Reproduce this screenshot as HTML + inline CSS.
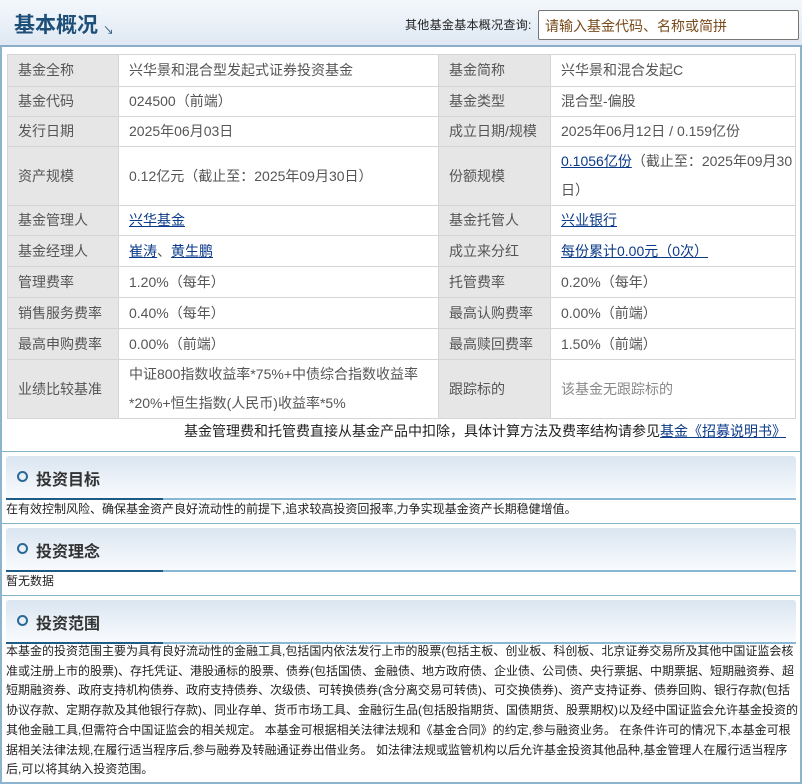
<!DOCTYPE html>
<html><head><meta charset="utf-8"><style>
*{margin:0;padding:0;box-sizing:border-box}
body{width:802px;height:784px;overflow:hidden;background:#fff;font-family:"Liberation Sans","Noto Sans CJK SC",sans-serif;position:relative;color:#333}
.frame{position:absolute;left:0;top:0;width:802px;height:784px;border-left:2px solid #8cb4cf;border-right:2px solid #8cb4cf;border-bottom:2px solid #8cb4cf}
.hdr{position:absolute;left:0;top:0;width:802px;height:47px;background:linear-gradient(#f4f8fc,#dfe8f3);border-bottom:2px solid #8aaec9}
.hdr h1{position:absolute;left:14px;top:9px;font-size:21px;font-weight:bold;color:#1e4f78}
.hdr .arr{position:absolute;left:103px;top:22px;font-size:11px;color:#1e4f78}
.hdr .q{position:absolute;left:405px;top:16px;font-size:12px;letter-spacing:0.3px;color:#222;white-space:nowrap}
.hdr .inp{position:absolute;left:538px;top:10px;width:261px;height:30px;border:1px solid #777;background:#fff;font-size:14px;color:#7a4a1a;padding:5px 6px;border-radius:2px}
table{position:absolute;left:7px;top:54px;width:789px;border-collapse:collapse;font-size:14px}
td{border:1px solid #d5d5d5;padding:0 8px 0 10px;color:#555;line-height:29px}
td.l{background:#e6e6e6;width:111px}
td.v1{width:320px}
td.l2{background:#e6e6e6;width:112px}
a{color:#0b3a8a;text-decoration:underline}
.note{position:absolute;right:16px;top:421px;font-size:14px;color:#222}
.sep{position:absolute;left:0;width:802px;height:1px;background:#8ab2c9}
.sec{position:absolute;left:6px;width:790px;height:44px;background:linear-gradient(#dae5f1,#fafcfe);border-radius:3px 3px 0 0}
.sec .bar{position:absolute;left:0;bottom:0;width:790px;height:2px;background:#8ab8d4}
.sec .bar2{position:absolute;left:0;bottom:0;width:157px;height:2px;background:#1e5c88}
.sec .c{position:absolute;left:11px;top:15px;width:11px;height:11px;border:2px solid #2a6a96;border-radius:50%}
.sec .t{position:absolute;left:30px;top:10px;font-size:16px;font-weight:bold;color:#333}
.txt{position:absolute;left:6px;font-size:12px;color:#222}
.para{position:absolute;left:6px;width:792px;top:642px;font-size:12px;line-height:19.7px;color:#222}
</style></head><body>
<div class="frame"></div>
<div class="hdr"><h1>基本概况</h1><span class="arr">↘</span><span class="q">其他基金基本概况查询:</span><div class="inp">请输入基金代码、名称或简拼</div></div>
<table>
<tr style="height:32px"><td class="l">基金全称</td><td class="v1">兴华景和混合型发起式证券投资基金</td><td class="l2">基金简称</td><td>兴华景和混合发起C</td></tr>
<tr style="height:30px"><td class="l">基金代码</td><td>024500（前端）</td><td class="l2">基金类型</td><td>混合型-偏股</td></tr>
<tr style="height:30px"><td class="l">发行日期</td><td>2025年06月03日</td><td class="l2">成立日期/规模</td><td>2025年06月12日 / 0.159亿份</td></tr>
<tr style="height:57px"><td class="l">资产规模</td><td>0.12亿元（截止至：2025年09月30日）</td><td class="l2">份额规模</td><td style="padding-right:2px"><a>0.1056亿份</a>（截止至：2025年09月30日）</td></tr>
<tr style="height:30px"><td class="l">基金管理人</td><td><a>兴华基金</a></td><td class="l2">基金托管人</td><td><a>兴业银行</a></td></tr>
<tr style="height:31px"><td class="l">基金经理人</td><td><a>崔涛</a>、<a>黄生鹏</a></td><td class="l2">成立来分红</td><td><a>每份累计0.00元（0次）</a></td></tr>
<tr style="height:31px"><td class="l">管理费率</td><td>1.20%（每年）</td><td class="l2">托管费率</td><td>0.20%（每年）</td></tr>
<tr style="height:31px"><td class="l">销售服务费率</td><td>0.40%（每年）</td><td class="l2">最高认购费率</td><td>0.00%（前端）</td></tr>
<tr style="height:31px"><td class="l">最高申购费率</td><td>0.00%（前端）</td><td class="l2">最高赎回费率</td><td>1.50%（前端）</td></tr>
<tr style="height:59px"><td class="l">业绩比较基准</td><td>中证800指数收益率*75%+中债综合指数收益率*20%+恒生指数(人民币)收益率*5%</td><td class="l2">跟踪标的</td><td style="color:#888">该基金无跟踪标的</td></tr>
</table>
<div class="note">基金管理费和托管费直接从基金产品中扣除，具体计算方法及费率结构请参见<a>基金《招募说明书》</a></div>
<div class="sep" style="top:451px"></div>
<div class="sec" style="top:456px"><div class="bar"></div><div class="bar2"></div><div class="c"></div><div class="t">投资目标</div></div>
<div class="txt" style="top:500px">在有效控制风险、确保基金资产良好流动性的前提下,追求较高投资回报率,力争实现基金资产长期稳健增值。</div>
<div class="sep" style="top:523px"></div>
<div class="sec" style="top:528px"><div class="bar"></div><div class="bar2"></div><div class="c"></div><div class="t">投资理念</div></div>
<div class="txt" style="top:572px">暂无数据</div>
<div class="sep" style="top:595px"></div>
<div class="sec" style="top:600px"><div class="bar"></div><div class="bar2"></div><div class="c"></div><div class="t">投资范围</div></div>
<div class="para">本基金的投资范围主要为具有良好流动性的金融工具,包括国内依法发行上市的股票(包括主板、创业板、科创板、北京证券交易所及其他中国证监会核准或注册上市的股票)、存托凭证、港股通标的股票、债券(包括国债、金融债、地方政府债、企业债、公司债、央行票据、中期票据、短期融资券、超短期融资券、政府支持机构债券、政府支持债券、次级债、可转换债券(含分离交易可转债)、可交换债券)、资产支持证券、债券回购、银行存款(包括协议存款、定期存款及其他银行存款)、同业存单、货币市场工具、金融衍生品(包括股指期货、国债期货、股票期权)以及经中国证监会允许基金投资的其他金融工具,但需符合中国证监会的相关规定。 本基金可根据相关法律法规和《基金合同》的约定,参与融资业务。 在条件许可的情况下,本基金可根据相关法律法规,在履行适当程序后,参与融券及转融通证券出借业务。 如法律法规或监管机构以后允许基金投资其他品种,基金管理人在履行适当程序后,可以将其纳入投资范围。</div>
</body></html>
